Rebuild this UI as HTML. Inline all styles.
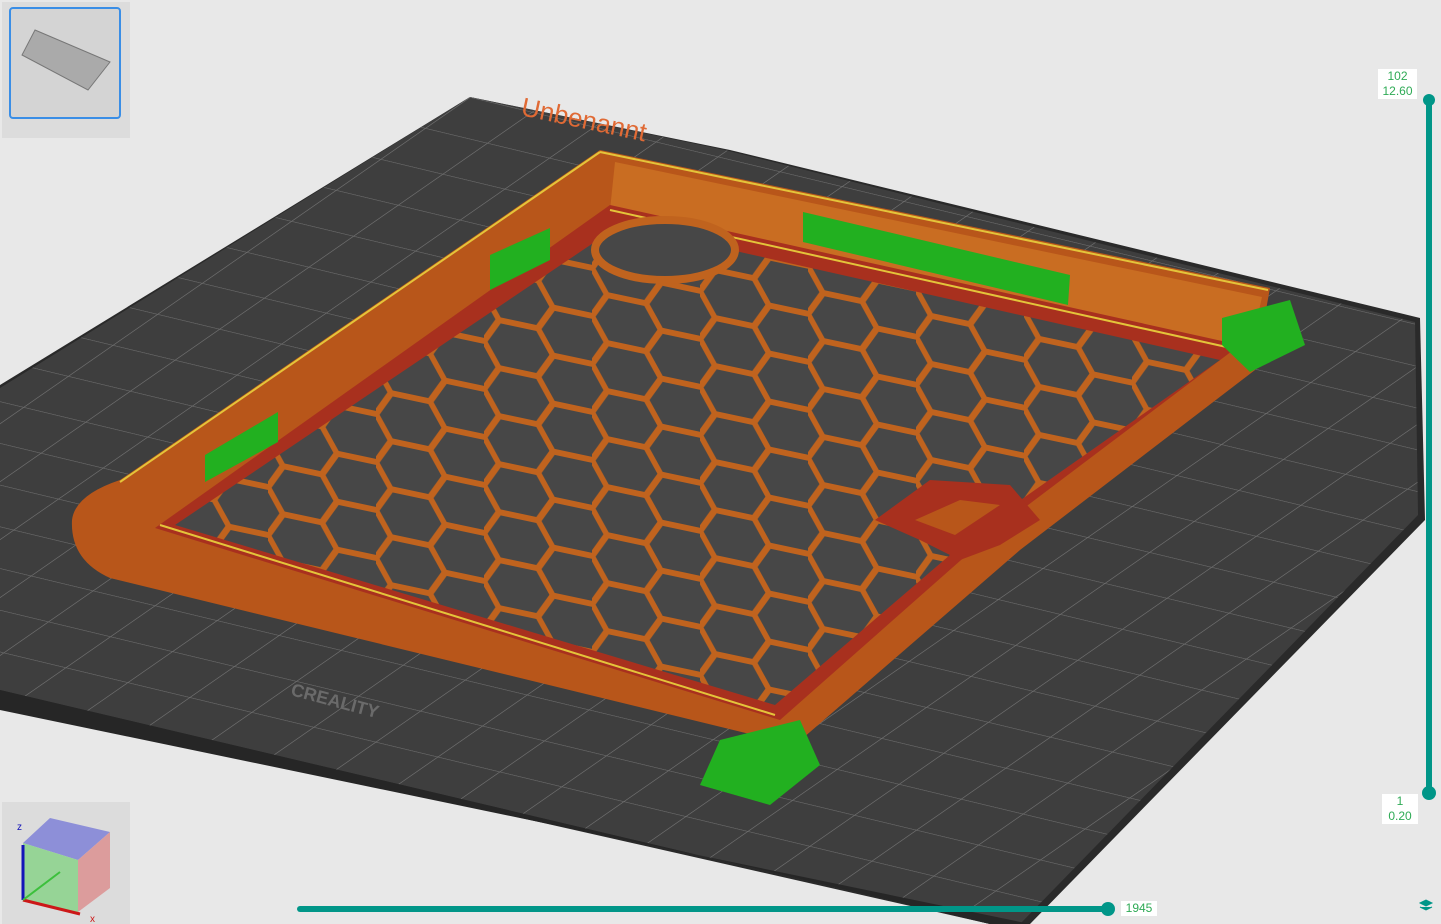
<!DOCTYPE html>
<html><head><style>
html,body{margin:0;padding:0;width:1441px;height:924px;overflow:hidden;background:#e8e8e8;font-family:"Liberation Sans",sans-serif}
.lbl{position:absolute;background:#fff;color:#2eaa55;font-size:12px;text-align:center;line-height:15px}
</style></head><body>
<svg width="1441" height="924" style="position:absolute;left:0;top:0">
<defs>
<pattern id="g" width="62" height="62" patternUnits="userSpaceOnUse" patternTransform="matrix(1,0.24,-0.72,0.5,470,97)">
<rect width="62" height="62" fill="#3e3e3e"/><path d="M0 0H62M0 0V62" stroke="#6e6e6e" stroke-width="1.8"/>
</pattern>
<pattern id="h" width="108" height="48" patternUnits="userSpaceOnUse" patternTransform="translate(160,200) skewY(12)">
<rect width="108" height="48" fill="#474747"/>
<path d="M0 24 L15 0 H54 L69 24 L54 48 H15 Z M69 24 H108" fill="none" stroke="#c0631e" stroke-width="6"/>
</pattern>
</defs>
<rect width="1441" height="924" fill="#e8e8e8"/>
<polygon points="470,97 730,150 1420,318 1425,520 1030,924 990,924 0,700 0,385" fill="#2a2a2a"/>
<polygon points="470,97 725,150 1415,322 1418,515 1020,924 990,924 0,690 0,388" fill="url(#g)"/>
<polygon points="0,690 990,924 1030,924 0,710" fill="#262626"/>
<path d="M600,150 L1270,288 L1255,370 L1020,550 L795,745 L110,578 Q70,560 72,520 Q75,495 120,480 Z" fill="#b8561a"/>
<polygon points="615,162 1262,297 1248,360 1240,350 610,210" fill="#c96d22"/>
<polygon points="610,205 1240,345 995,530 780,720 155,528" fill="#a8301e"/>
<polygon points="620,225 1220,360 985,525 775,705 175,525" fill="url(#h)"/>
<polyline points="600,152 1268,290" stroke="#e4c43a" stroke-width="2" fill="none"/>
<polyline points="120,482 600,152" stroke="#e4c43a" stroke-width="2" fill="none"/>
<polyline points="160,525 775,715" stroke="#e4c43a" stroke-width="2" fill="none"/>
<polyline points="610,210 1240,350" stroke="#e4c43a" stroke-width="2" fill="none"/>
<polygon points="875,520 930,480 1010,485 1040,520 1000,545 960,560 920,540" fill="#a8301e"/>
<polygon points="915,520 960,500 1000,505 955,535" fill="#b8561a"/>
<ellipse cx="665" cy="250" rx="70" ry="30" fill="#474747" stroke="#c0631e" stroke-width="8"/>
<polygon points="803,212 1070,275 1068,305 803,242" fill="#22b020"/>
<polygon points="490,255 550,228 550,260 490,290" fill="#22b020"/>
<polygon points="205,455 278,412 278,442 205,482" fill="#22b020"/>
<polygon points="1222,318 1290,300 1305,345 1250,372 1222,345" fill="#22b020"/>
<polygon points="700,785 720,740 800,720 820,765 770,805" fill="#22b020"/>
<text x="520" y="115" fill="#e06a35" font-size="26" transform="rotate(12 520 115)">Unbenannt</text>
<text x="290" y="695" fill="#6a6a6a" font-size="18" font-weight="bold" transform="rotate(15 290 695)">CREALITY</text>
<rect x="1426" y="100" width="6" height="695" fill="#009688"/>
<circle cx="1429" cy="100" r="6" fill="#009688"/>
<circle cx="1429" cy="793" r="7" fill="#009688"/>
<rect x="297" y="906" width="812" height="6" rx="3" fill="#009688"/>
<circle cx="1108" cy="909" r="7" fill="#009688"/>
<rect x="2" y="2" width="128" height="136" fill="#dcdcdc"/>
<rect x="10" y="8" width="110" height="110" rx="3" fill="#d4d4d4" stroke="#3a8ee6" stroke-width="2"/>
<polygon points="35,30 110,62 88,90 22,55" fill="#aaa" stroke="#777"/>
<rect x="2" y="802" width="128" height="122" fill="#dcdcdc"/>
<polygon points="23,843 50,818 110,832 78,860" fill="#8d8fd8"/>
<polygon points="23,843 78,860 78,912 23,900" fill="#96d496"/>
<polygon points="78,860 110,832 110,888 78,912" fill="#dc9c9c"/>
<line x1="23" y1="845" x2="23" y2="900" stroke="#1414b8" stroke-width="3"/>
<line x1="23" y1="900" x2="80" y2="914" stroke="#cc1818" stroke-width="3"/>
<line x1="23" y1="900" x2="60" y2="872" stroke="#3cc03c" stroke-width="2"/>
<text x="17" y="830" fill="#1414b8" font-size="10">z</text>
<text x="90" y="922" fill="#cc1818" font-size="10">x</text>
<path d="M1420 903l6-3 6 3-6 3z M1420 907l6 3 6-3" stroke="#009688" fill="#009688"/>
</svg>
<div class="lbl" style="left:1378px;top:69px;width:39px">102<br>12.60</div>
<div class="lbl" style="left:1382px;top:794px;width:36px">1<br>0.20</div>
<div class="lbl" style="left:1121px;top:901px;width:36px">1945</div>
</body></html>
